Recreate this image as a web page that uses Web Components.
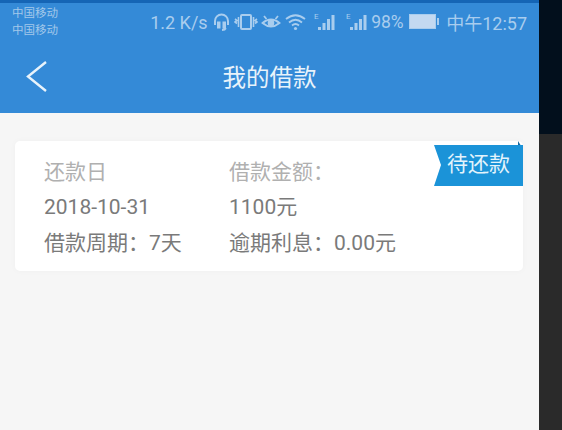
<!DOCTYPE html>
<html>
<head>
<meta charset="utf-8">
<style>
    html, body { margin: 0; height: 100%; background: #2a2a2a; overflow: hidden; }
    body { font-family: "Roboto", "Noto Sans CJK SC", sans-serif; }
</style>
</head>
<body>
<phone-frame>
    <status-bar></status-bar>
    <title-bar>我的借款</title-bar>
    <loan-card
        due-label="还款日" due-date="2018-10-31" period="借款周期：7天"
        amount-label="借款金额：" amount="1100元" interest="逾期利息：0.00元"
        status="待还款"></loan-card>
</phone-frame>

<script>
class PhoneFrame extends HTMLElement {
    constructor() {
        super();
        this.attachShadow({ mode: "open" });
        this.shadowRoot.innerHTML = `
<style>
    :host { display: flex; width: 562px; height: 430px; }
    .screen { width: 539px; height: 430px; background: #f6f6f6; flex: none; }
    .side { flex: 1; display: flex; flex-direction: column; }
    .side .top { height: 134px; background: #020f1c; }
    .side .rest { flex: 1; background: #2a2a2a; }
</style>
<div class="screen"><slot></slot></div>
<div class="side"><div class="top"></div><div class="rest"></div></div>`;
    }
}

class StatusBar extends HTMLElement {
    constructor() {
        super();
        this.attachShadow({ mode: "open" });
        const signal = `
<svg width="22" height="20" viewBox="0 0 22 20" fill="#a9cdee">
    <text x="0" y="7" font-size="8" font-family="Roboto" fill="#a9cdee">E</text>
    <rect x="4" y="15" width="3" height="3"/>
    <rect x="8.5" y="11" width="3" height="7"/>
    <rect x="13" y="7" width="3" height="11"/>
    <rect x="17.5" y="3" width="3" height="15"/>
</svg>`;
        this.shadowRoot.innerHTML = `
<style>
    :host { display: block; height: 44px; background: #348ad7; border-top: 3px solid #1565b5; box-sizing: border-box; color: #a9cdee; }
    .row { display: flex; align-items: flex-start; height: 100%; padding: 0 12px; }
    .carrier { font-size: 11.5px; line-height: 17px; padding-top: 2px; width: 140px; color: #a3c8ea; white-space: nowrap; }
    .right { display: flex; align-items: center; height: 38px; font-size: 18px; white-space: nowrap; }
    svg { display: block; flex: none; }
    .speed { width: 57px; margin-right: 6px; }
    .pct { font-size: 17.5px; width: 35px; margin-left: 3px; }
    .clock { font-size: 18px; margin-left: 6px; }
</style>
<div class="row">
    <div class="carrier">中国移动<br>中国移动</div>
    <div class="right">
        <span class="speed">1.2 K/s</span>
        <svg width="17" height="18" viewBox="0 0 17 18" fill="none" stroke="#a9cdee" stroke-width="2">
            <path d="M2 12 V8 a6.5 6.5 0 0 1 13 0 V12"/>
            <path d="M5 9.5 h1.5 v5 h-1.5 z M10.5 9.5 h1.5 v5 h-1.5 z M13 15 q-1 2 -4 2"/>
        </svg>
        <svg width="24" height="18" viewBox="0 0 24 18" fill="none" stroke="#a9cdee" stroke-width="1.6" style="margin-left:4px">
            <rect x="7" y="2" width="10" height="14" rx="1" stroke-width="2"/>
            <path d="M1 6 l2 1.5 l-2 1.5 l2 1.5 M4.5 4 v10 M19.5 4 v10 M23 6 l-2 1.5 l2 1.5 l-2 1.5"/>
        </svg>
        <svg width="20" height="18" viewBox="0 0 20 18" fill="none" stroke="#a9cdee" stroke-width="1.8" style="margin-left:3px">
            <path d="M1.5 10 Q10 3 18.5 10 Q10 17 1.5 10 z"/>
            <circle cx="10" cy="10" r="2.4" fill="#a9cdee"/>
            <path d="M3 3 l2.5 3 M17 3 l-2.5 3"/>
        </svg>
        <svg width="21" height="18" viewBox="0 0 21 18" fill="none" stroke="#a9cdee" stroke-width="1.8" style="margin-left:4px">
            <path d="M1 6 Q10.5 -1.5 20 6 M4 9.5 Q10.5 4 17 9.5 M7 12.5 Q10.5 9.5 14 12.5"/>
            <circle cx="10.5" cy="15.5" r="1.6" fill="#a9cdee" stroke="none"/>
        </svg>
        <span style="margin-left:8px">${signal}</span>
        <span style="margin-left:10px">${signal}</span>
        <span class="pct">98%</span>
        <svg width="31" height="16" viewBox="0 0 31 16" style="margin-left:3px">
            <rect x="0.5" y="0.5" width="26" height="14" fill="#c3d9f1" stroke="#a9cdee"/>
            <rect x="28" y="4" width="2" height="7" fill="#a9cdee"/>
        </svg>
        <span class="clock">中午12:57</span>
    </div>
</div>`;
    }
}

class TitleBar extends HTMLElement {
    constructor() {
        super();
        this.attachShadow({ mode: "open" });
        this.shadowRoot.innerHTML = `
<style>
    :host { display: block; position: relative; height: 69px; background: #348ad7; color: #e8f3fb; }
    .bar { display: flex; align-items: center; justify-content: center; height: 100%; padding-bottom: 2px; box-sizing: border-box; font-size: 23.5px; line-height: 28px; }
    svg { position: absolute; left: 25px; top: 16px; }
</style>
<svg width="24" height="34" viewBox="0 0 24 34" fill="none" stroke="#e8f3fb" stroke-width="2.4">
    <path d="M21 2 L3 16.5 L21 31"/>
</svg>
<div class="bar"><slot></slot></div>`;
    }
}

class LoanCard extends HTMLElement {
    connectedCallback() {
        const a = (name) => this.getAttribute(name) || "";
        this.attachShadow({ mode: "open" });
        this.shadowRoot.innerHTML = `
<style>
    :host { display: block; position: relative; width: 508px; margin: 28px 0 0 15px; height: 130px; box-sizing: border-box; padding: 13px 0 0 29px; background: #fff; border-radius: 5px; box-shadow: 0 0 6px rgba(0,0,0,.03); font-size: 21px; line-height: 24px; color: #7a7a7a; }
    .grid { display: grid; grid-template-columns: 185px auto; grid-auto-rows: 35.5px; align-items: center; white-space: nowrap; }
    .label { color: #b0b0b0; }
    .ribbon { position: absolute; left: 419px; top: 0; }
    .status { position: absolute; left: 432px; top: 11px; font-size: 21px; color: #e4f4fc; }
</style>
<div class="grid">
    <div class="label">${a("due-label")}</div><div class="label">${a("amount-label")}</div>
    <div>${a("due-date")}</div><div>${a("amount")}</div>
    <div>${a("period")}</div><div>${a("interest")}</div>
</div>
<svg class="ribbon" width="89" height="45" viewBox="0 0 89 45">
    <path d="M84 0 L89 8 L84 5 z" fill="#17689f"/>
    <path d="M0 4 H89 V45 H0 L7 24 z" fill="#1b93d8"/>
</svg>
<div class="status">${a("status")}</div>`;
    }
}

customElements.define("phone-frame", PhoneFrame);
customElements.define("status-bar", StatusBar);
customElements.define("title-bar", TitleBar);
customElements.define("loan-card", LoanCard);
</script>
</body>
</html>
